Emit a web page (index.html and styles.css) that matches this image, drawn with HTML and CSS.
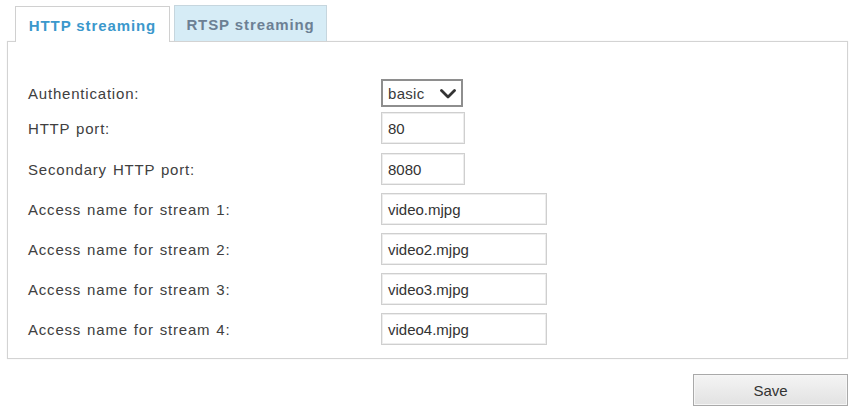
FILE: index.html
```html
<!DOCTYPE html>
<html lang="en">
<head>
<meta charset="utf-8">
<title>Streaming settings</title>
<link rel="stylesheet" href="styles.css">
</head>
<body>
<div class="page">
  <div class="tabs">
    <div class="tab tab-active">HTTP streaming</div>
    <div class="tab tab-inactive">RTSP streaming</div>
  </div>
  <div class="panel">
    <div class="row row-first">
      <span class="label">Authentication:</span>
      <div class="select">
        <span class="select-text">basic</span>
        <svg class="chev" width="16" height="10" viewBox="0 0 16 10"><path d="M1.5 1.5 L8 8 L14.5 1.5" fill="none" stroke="#333" stroke-width="2.8" stroke-linecap="round" stroke-linejoin="round"/></svg>
      </div>
    </div>
    <div class="row">
      <span class="label">HTTP port:</span>
      <div class="input input-short">80</div>
    </div>
    <div class="row row-gap">
      <span class="label">Secondary HTTP port:</span>
      <div class="input input-short">8080</div>
    </div>
    <div class="row">
      <span class="label">Access name for stream 1:</span>
      <div class="input input-long">video.mjpg</div>
    </div>
    <div class="row">
      <span class="label">Access name for stream 2:</span>
      <div class="input input-long">video2.mjpg</div>
    </div>
    <div class="row">
      <span class="label">Access name for stream 3:</span>
      <div class="input input-long">video3.mjpg</div>
    </div>
    <div class="row">
      <span class="label">Access name for stream 4:</span>
      <div class="input input-long">video4.mjpg</div>
    </div>
  </div>
  <div class="actions">
    <button class="save">Save</button>
  </div>
</div>
</body>
</html>
```

FILE: styles.css
```css
* { box-sizing: border-box; }
html, body { margin: 0; padding: 0; background: #fff; }
body {
  font-family: "Liberation Sans", Arial, sans-serif;
  font-size: 15px;
  color: #3a3a3a;
}
.page {
  width: 854px;
  height: 409px;
  padding: 5px 6px 0 7px;
}
.tabs {
  display: flex;
  align-items: flex-end;
  gap: 4px;
  margin-left: 8px;
  height: 36px;
  position: relative;
  z-index: 1;
}
.tab {
  display: flex;
  align-items: center;
  justify-content: center;
  font-weight: bold;
  letter-spacing: 0.9px;
  border: 1px solid #d0d0d0;
  border-bottom: none;
}
.tab-active {
  width: 155px;
  height: 36px;
  margin-bottom: -1px;
  background: #fff;
  color: #3b98cc;
  padding-top: 2px;
}
.tab-inactive {
  width: 153px;
  height: 36px;
  background: #d6ecf6;
  color: #6c8094;
  border-color: #c6d6de;
  padding-top: 1px;
}
.panel {
  width: 841px;
  height: 318px;
  border: 1px solid #d3d3d3;
  box-shadow: 0 0 1px #e4e4e4;
  padding: 37px 20px 0 20px;
  display: flex;
  flex-direction: column;
  gap: 8px;
}
.row {
  display: flex;
  align-items: center;
  height: 32px;
}
.row-first {
  height: 28px;
  margin-bottom: -3px;
}
.row-gap { margin-top: 1px; }
.label {
  width: 353px;
  flex: none;
  letter-spacing: 0.8px;
  word-spacing: 1px;
  color: #404040;
}
.select {
  width: 82px;
  height: 28px;
  border: 2px solid #8e8e8e;
  display: flex;
  align-items: center;
  justify-content: space-between;
  padding: 0 5px 0 5px;
  color: #3a3a3a;
}
.select-text { letter-spacing: 0.3px; }
.chev { display: block; margin-top: 1px; }
.input {
  height: 32px;
  border: 1px solid #cfcfcf;
  box-shadow: inset 0 0 0 1px #ededed;
  display: flex;
  align-items: center;
  padding: 0 6px;
  color: #333;
}
.input-short { width: 84px; }
.input-long { width: 166px; }
.actions {
  display: flex;
  justify-content: flex-end;
  padding-top: 15px;
  padding-right: 0px;
}
.save {
  width: 155px;
  height: 32px;
  border: 1px solid #a9a9a9;
  box-shadow: inset 0 0 0 1px #f6f6f6;
  background: linear-gradient(#f4f4f4, #e2e2e2);
  font-family: "Liberation Sans", Arial, sans-serif;
  font-size: 15px;
  color: #333;
  padding: 0;
}
```
